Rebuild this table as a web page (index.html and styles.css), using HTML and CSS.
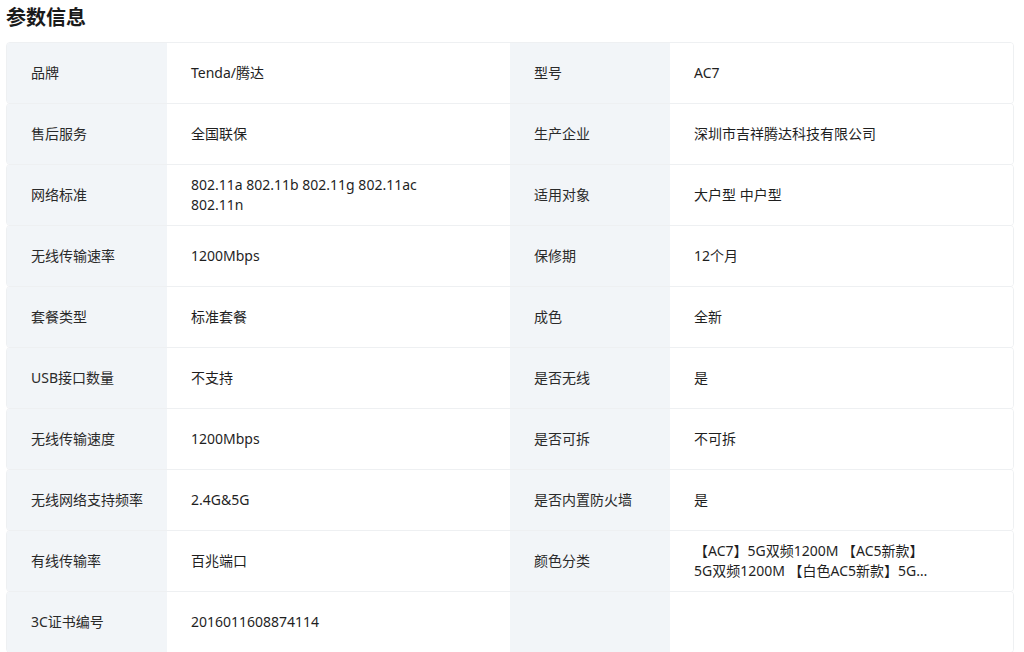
FILE: index.html
```html
<!DOCTYPE html>
<html lang="zh">
<head>
<meta charset="utf-8">
<link rel="stylesheet" href="styles.css">
</head>
<body>
<div class="page">
  <h2 class="title">参数信息</h2>
  <div class="table">
    <div class="row">
      <div class="cell label">品牌</div><div class="cell value">Tenda/腾达</div>
      <div class="cell label">型号</div><div class="cell value">AC7</div>
    </div>
    <div class="row">
      <div class="cell label">售后服务</div><div class="cell value">全国联保</div>
      <div class="cell label">生产企业</div><div class="cell value">深圳市吉祥腾达科技有限公司</div>
    </div>
    <div class="row">
      <div class="cell label">网络标准</div><div class="cell value"><span class="txt">802.11a 802.11b 802.11g 802.11ac 802.11n</span></div>
      <div class="cell label">适用对象</div><div class="cell value">大户型 中户型</div>
    </div>
    <div class="row">
      <div class="cell label">无线传输速率</div><div class="cell value">1200Mbps</div>
      <div class="cell label">保修期</div><div class="cell value">12个月</div>
    </div>
    <div class="row">
      <div class="cell label">套餐类型</div><div class="cell value">标准套餐</div>
      <div class="cell label">成色</div><div class="cell value">全新</div>
    </div>
    <div class="row">
      <div class="cell label">USB接口数量</div><div class="cell value">不支持</div>
      <div class="cell label">是否无线</div><div class="cell value">是</div>
    </div>
    <div class="row">
      <div class="cell label">无线传输速度</div><div class="cell value">1200Mbps</div>
      <div class="cell label">是否可拆</div><div class="cell value">不可拆</div>
    </div>
    <div class="row">
      <div class="cell label">无线网络支持频率</div><div class="cell value">2.4G&amp;5G</div>
      <div class="cell label">是否内置防火墙</div><div class="cell value">是</div>
    </div>
    <div class="row">
      <div class="cell label">有线传输率</div><div class="cell value">百兆端口</div>
      <div class="cell label">颜色分类</div><div class="cell value"><span class="txt clamp">【AC7】5G双频1200M 【AC5新款】5G双频1200M 【白色AC5新款】5G双频1200M 【AC6】5G双频1200M</span></div>
    </div>
    <div class="row">
      <div class="cell label">3C证书编号</div><div class="cell value">2016011608874114</div>
      <div class="cell label"></div><div class="cell value"></div>
    </div>
  </div>
</div>
</body>
</html>
```

FILE: styles.css
```css
* { box-sizing: border-box; }
html, body { margin: 0; padding: 0; background: #fff; }
body {
  font-family: "Noto Sans", "Noto Sans CJK SC", sans-serif;
  color: #333;
  font-size: 14px;
}
.page { padding: 4px 10px 0 6px; }
.title {
  margin: 0 0 11px 0;
  font-size: 20px;
  font-weight: 700;
  line-height: 28px;
  color: #1a1a1a;
}
.table { display: flex; flex-direction: column; }
.row {
  display: grid;
  grid-template-columns: 160px 1fr 160px 1fr;
  height: 62px;
  margin-top: -1px;
  border: 1px solid #eef0f2;
  border-radius: 4px;
  overflow: hidden;
}
.cell {
  display: flex;
  align-items: center;
  padding: 0 24px;
  line-height: 20px;
}
.label { background: #f2f5f8; color: #2a2a2a; }
.value { background: #fff; color: #1f1f1f; }
.txt { max-width: 244px; }
.clamp {
  display: -webkit-box;
  -webkit-line-clamp: 2;
  -webkit-box-orient: vertical;
  overflow: hidden;
}
```
